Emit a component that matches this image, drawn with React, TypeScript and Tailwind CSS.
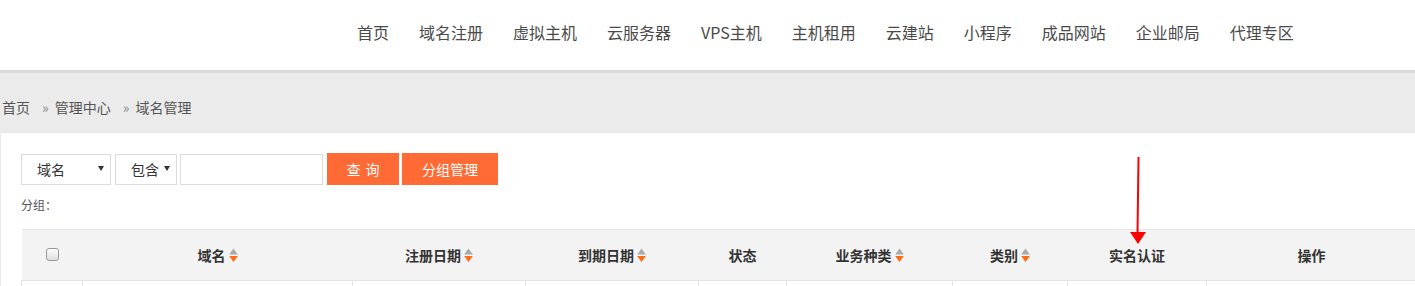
import React from 'react';

const navItems = ['首页', '域名注册', '虚拟主机', '云服务器', 'VPS主机', '主机租用', '云建站', '小程序', '成品网站', '企业邮局', '代理专区'];

const columns = [
  { label: '', w: 'w-[61px]', check: true },
  { label: '域名', w: 'w-[270px]', sort: true },
  { label: '注册日期', w: 'w-[173px]', sort: true },
  { label: '到期日期', w: 'w-[173px]', sort: true },
  { label: '状态', w: 'w-[88px]' },
  { label: '业务种类', w: 'w-[166px]', sort: true },
  { label: '类别', w: 'w-[115px]', sort: true },
  { label: '实名认证', w: 'w-[139px]' },
  { label: '操作', w: 'w-[210px]' },
];

function SortIcon() {
  return (
    <svg width="9" height="15" viewBox="0 0 9 15" className="ml-[3px] inline-block">
      <polygon points="4.5,0.5 8.8,6.5 0.2,6.5" fill="#a9a9a9" />
      <polygon points="0.2,8 8.8,8 4.5,14" fill="#ff6a13" />
    </svg>
  );
}

function Select({ label, width }: { label: string; width: string }) {
  return (
    <div className={`${width} h-[31px] border border-[#dcdcdc] bg-white flex items-center justify-between pl-[15px] pr-[6px] text-[14px] text-[#333]`}>
      <span>{label}</span>
      <svg width="6" height="5" viewBox="0 0 6 5" className="mb-[2px]">
        <polygon points="0,0 6,0 3,5" fill="#333" />
      </svg>
    </div>
  );
}

export default function App() {
  return (
    <div className="w-[1415px] h-[286px] overflow-hidden bg-[#ebebeb] relative" style={{ fontFamily: '"Noto Sans CJK SC", "Noto Sans", sans-serif' }}>
      {/* top nav */}
      <header className="h-[73px] bg-white border-b-[3px] border-[#dadada]">
        <nav className="flex items-center h-[64px] pl-[342px]">
          {navItems.map((n) => (
            <span key={n} className="px-[15px] text-[16px] text-[#4a4a4a] leading-none">{n}</span>
          ))}
        </nav>
      </header>

      {/* breadcrumb */}
      <div className="h-[60px] flex items-center pl-[2px] pt-[8px] text-[14px] text-[#555]">
        <span>首页</span>
        <span className="ml-[12px] mr-[6px] text-[14px] text-[#888]">»</span>
        <span>管理中心</span>
        <span className="ml-[12px] mr-[6px] text-[14px] text-[#888]">»</span>
        <span>域名管理</span>
      </div>

      {/* panel */}
      <div className="ml-px bg-white pt-[20px] pl-[20px] h-[200px]">
        <div className="flex items-center">
          <Select label="域名" width="w-[90px]" />
          <div className="ml-[4px]">
            <Select label="包含" width="w-[62px]" />
          </div>
          <div className="ml-[3px] w-[143px] h-[31px] border border-[#dcdcdc] bg-white" />
          <button className="ml-[4px] w-[72px] h-[32px] bg-[#ff6a35] text-white text-[14px] tracking-[5px] pl-[5px]">查询</button>
          <button className="ml-[3px] w-[96px] h-[32px] bg-[#ff6a35] text-white text-[14px]">分组管理</button>
        </div>
        <div className="mt-[12px] h-[16px] text-[12px] text-[#555] leading-[16px]">分组：</div>

        <table className="mt-[16px] border-collapse table-fixed w-[1395px]">
          <thead>
            <tr className="h-[51px] bg-[#f3f3f3] border-t border-[#e6e6e6] border-b border-b-[#e3e3e3]">
              {columns.map((c, i) => (
                <th key={i} className={`${c.w} p-0 text-center text-[14px] font-bold text-[#333]`}>
                  {c.check ? (
                    <span className="inline-block w-[13px] h-[13px] mt-[4px] border border-[#999] rounded-[3px] bg-gradient-to-b from-[#fdfdfd] to-[#dedede]" />
                  ) : (
                    <span className="inline-flex items-center">
                      {c.label}
                      {c.sort && <SortIcon />}
                    </span>
                  )}
                </th>
              ))}
            </tr>
          </thead>
          <tbody>
            <tr className="h-[30px]">
              {columns.map((c, i) => (
                <td key={i} className={`${c.w} border-l border-[#e3e3e3]`} />
              ))}
            </tr>
          </tbody>
        </table>
      </div>

      {/* annotation arrow */}
      <svg className="absolute left-[1128px] top-[156px]" width="20" height="90" viewBox="0 0 20 90">
        <line x1="10.5" y1="1" x2="9.5" y2="78" stroke="#ff0000" strokeWidth="2" />
        <polygon points="2,76 18,76 10,88" fill="#ff0000" />
      </svg>
    </div>
  );
}
